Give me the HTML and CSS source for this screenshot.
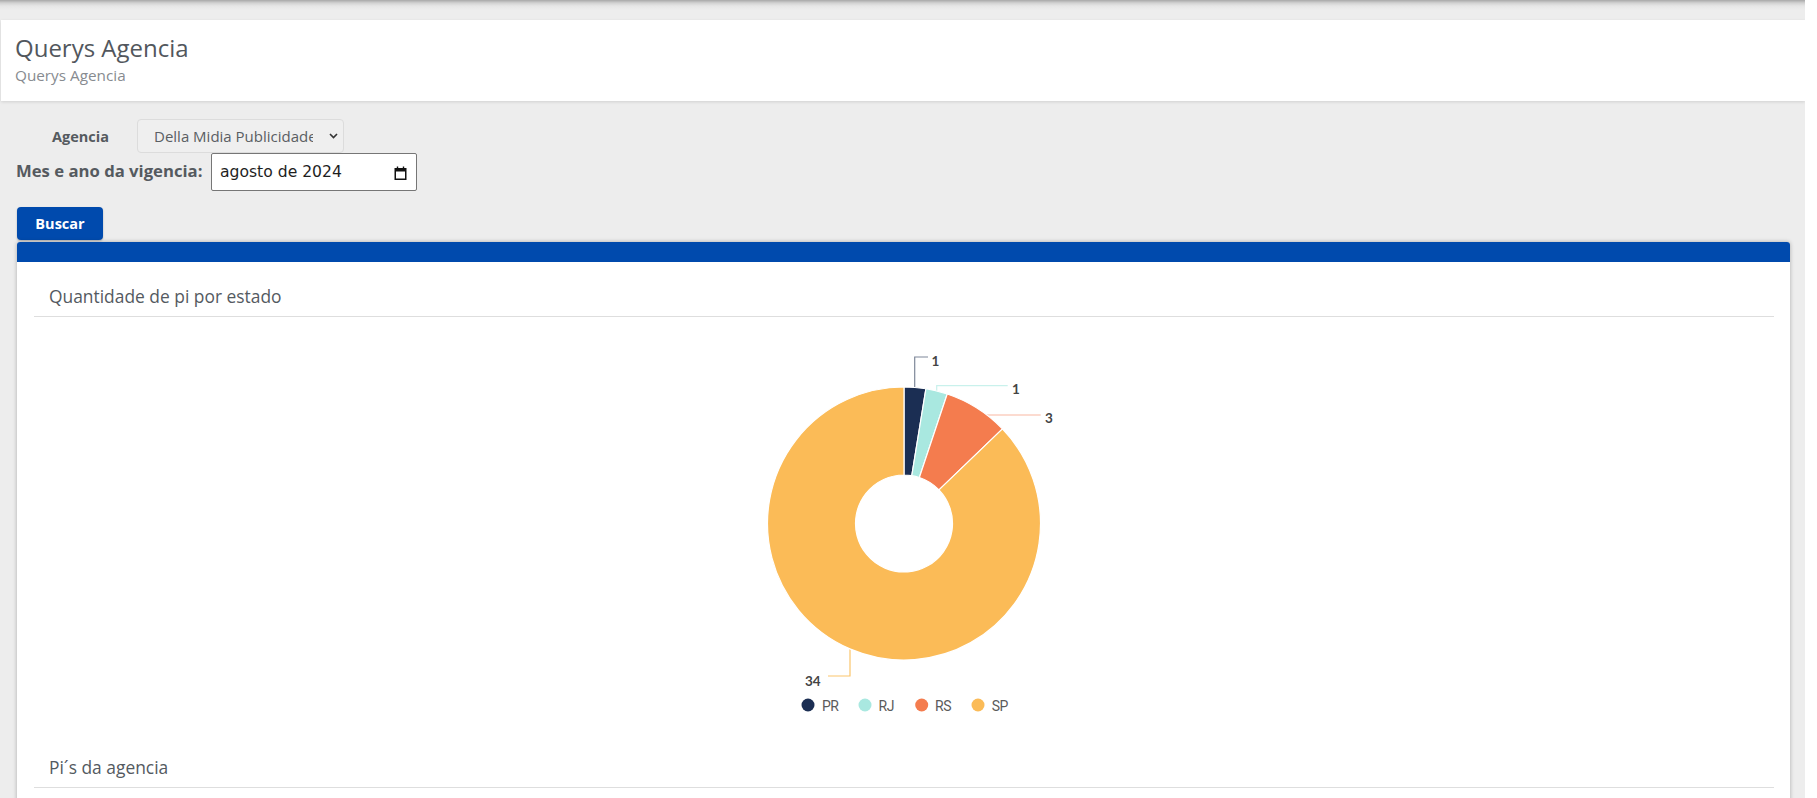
FILE: index.html
```html
<!DOCTYPE html>
<html lang="pt-BR">
<head>
<meta charset="utf-8">
<title>Querys Agencia</title>
<link rel="stylesheet" href="styles.css">
</head>
<body>
<div class="page">
  <header class="page-head">
    <h1 class="page-title">Querys Agencia</h1>
    <p class="page-sub">Querys Agencia</p>
  </header>

  <form class="filters">
    <div class="row row-agencia">
      <label class="lbl lbl-sm">Agencia</label>
      <div class="select">
        <span class="select-text">Della Midia Publicidade</span>
        <svg class="chev" width="9" height="6" viewBox="0 0 9 6"><polyline points="1,1 4.5,4.6 8,1" fill="none" stroke="#333" stroke-width="1.6"/></svg>
      </div>
    </div>
    <div class="row row-date">
      <label class="lbl lbl-lg">Mes e ano da vigencia:</label>
      <div class="date-input">
        <span class="date-text">agosto de 2024</span>
        <svg class="cal" width="13" height="14" viewBox="0 0 13 14">
          <rect x="1.25" y="2.75" width="10.5" height="10.5" fill="none" stroke="#111" stroke-width="1.5"/>
          <rect x="1" y="2.5" width="11" height="3" fill="#111"/>
          <rect x="2.8" y="0.5" width="1.4" height="2.5" fill="#111"/>
          <rect x="8.8" y="0.5" width="1.4" height="2.5" fill="#111"/>
        </svg>
      </div>
    </div>
    <button type="button" class="btn">Buscar</button>
  </form>

  <section class="card">
    <div class="card-bar"></div>
    <div class="card-body">
      <div class="section-head">Quantidade de pi por estado</div>
      <svg class="chart" width="1740" height="416" viewBox="4 0 1740 416">
        <g class="leaders" fill="none" stroke-width="1.2">
          <polyline points="884.7,72 884.7,40 898,40" stroke="#7e8899"/>
          <polyline points="906.7,76 906.7,68.7 977.7,68.7" stroke="#c9f1ec"/>
          <polyline points="945,98 1010.7,98" stroke="#f9b7a1"/>
          <polyline points="820,328 820,359 798,359" stroke="#fbc56c"/>
        </g>
        <g class="slices" stroke="#fff" stroke-width="1.2" stroke-linejoin="round">
          <path fill="#1b2e53" d="M 874 70 A 136.5 136.5 0 0 1 895.90 71.77 L 881.78 158.63 A 48.5 48.5 0 0 0 874 158 Z"/>
          <path fill="#a9e8e0" d="M 895.90 71.77 A 136.5 136.5 0 0 1 917.23 77.02 L 889.36 160.50 A 48.5 48.5 0 0 0 881.78 158.63 Z"/>
          <path fill="#f47c4e" d="M 917.23 77.02 A 136.5 136.5 0 0 1 972.44 111.94 L 908.98 172.90 A 48.5 48.5 0 0 0 889.36 160.50 Z"/>
          <path fill="#fbbb57" d="M 972.44 111.94 A 136.5 136.5 0 1 1 874 70 L 874 158 A 48.5 48.5 0 1 0 908.98 172.90 Z"/>
        </g>
        <g class="vals">
          <text x="901.5" y="49">1</text>
          <text x="982" y="77.3">1</text>
          <text x="1015" y="106.3">3</text>
          <text x="775" y="368.7">34</text>
        </g>
        <g class="legend">
          <circle cx="778" cy="388" r="6.5" fill="#1b2e53"/>
          <text x="792" y="393.5">PR</text>
          <circle cx="835" cy="388" r="6.5" fill="#a9e8e0"/>
          <text x="848.5" y="393.5">RJ</text>
          <circle cx="891.7" cy="388" r="6.5" fill="#f47c4e"/>
          <text x="905" y="393.5">RS</text>
          <circle cx="948" cy="388" r="6.5" fill="#fbbb57"/>
          <text x="961.7" y="393.5">SP</text>
        </g>
      </svg>
      <div class="section-head">Pi´s da agencia</div>
    </div>
  </section>
</div>
</body>
</html>
```

FILE: styles.css
```css
* { box-sizing: border-box; }

html, body {
  margin: 0;
  padding: 0;
  background: #ffffff;
}

body {
  font-family: "Open Sans", "Lato", sans-serif;
  overflow: hidden;
}

.page {
  width: 1805px;
  height: 798px;
  overflow: hidden;
  background: linear-gradient(to bottom, #a8a8a8 0, #d2d2d2 3px, #e6e6e6 6px, #ededed 10px, #ededed 100%);
  padding-top: 20px;
}

.page-head {
  margin: 0 0 0 1px;
  background: #fff;
  padding: 15px 14px 17px;
  box-shadow: 0 1px 3px rgba(0, 0, 0, 0.12);
}

.page-title {
  margin: 0;
  font-size: 24px;
  line-height: 26px;
  font-weight: 400;
  color: #52575d;
}

.page-sub {
  margin: 6px 0 0;
  font-size: 15.3px;
  line-height: 17px;
  color: #878b90;
}

.filters {
  margin: 0;
  padding-top: 18px;
}

.row {
  display: flex;
  align-items: center;
}

.row-agencia {
  height: 34px;
  padding-left: 52px;
}

.row-date {
  height: 38px;
  padding-left: 16px;
}

.lbl {
  flex: none;
  font-weight: 700;
  color: #555a5f;
}

.lbl-sm {
  width: 85px;
  font-size: 14.5px;
  line-height: 17px;
}

.lbl-lg {
  width: 195px;
  font-size: 16.7px;
  line-height: 20px;
  margin-bottom: 3px;
}

.select {
  width: 207px;
  height: 34px;
  display: flex;
  align-items: center;
  background: #efefef;
  border: 1px solid #dcdcdc;
  border-radius: 4px;
  padding: 0 5px 0 16px;
}

.select-text {
  flex: 1;
  min-width: 0;
  overflow: hidden;
  white-space: nowrap;
  font-size: 15px;
  line-height: 17px;
  color: #5a5e63;
}

.chev {
  flex: none;
  margin-left: 16px;
  margin-top: -1px;
}

.date-input {
  width: 206px;
  height: 38px;
  display: flex;
  align-items: center;
  justify-content: space-between;
  background: #fff;
  border: 1px solid #767676;
  border-radius: 2px;
  padding: 0 9px 0 8px;
}

.date-text {
  font-family: "DejaVu Sans", "Liberation Sans", sans-serif;
  font-size: 15.6px;
  line-height: 18px;
  color: #1e1e1e;
}

.cal {
  flex: none;
  margin-top: 1px;
}

.btn {
  display: block;
  margin: 16px 0 0 17px;
  width: 86px;
  height: 33px;
  border: 0;
  border-radius: 4px;
  background: #004aad;
  color: #fff;
  font-family: "Open Sans", sans-serif;
  font-weight: 700;
  font-size: 14.5px;
  line-height: 17px;
  padding: 0;
  box-shadow: 0 1px 2px rgba(0, 0, 0, 0.25);
}

.card {
  margin: 2px 0 0 17px;
  width: 1773px;
  height: 600px;
  background: #fff;
  border-radius: 3px 3px 0 0;
  box-shadow: 0 0 4px rgba(0, 0, 0, 0.28);
}

.card-bar {
  height: 20px;
  background: #004aad;
  border-radius: 3px 3px 0 0;
}

.card-body {
  padding: 0 16px 0 17px;
}

.section-head {
  padding: 24px 15px 10px;
  font-size: 17.4px;
  line-height: 20px;
  color: #545a61;
  border-bottom: 1px solid #dedede;
}

.chart {
  display: block;
}

.vals text {
  font-family: "Lato", sans-serif;
  font-weight: 700;
  font-size: 13.5px;
  fill: #444;
}

.legend text {
  font-family: "Roboto", sans-serif;
  font-size: 14px;
  letter-spacing: -0.5px;
  fill: #5b5b5b;
}
```
